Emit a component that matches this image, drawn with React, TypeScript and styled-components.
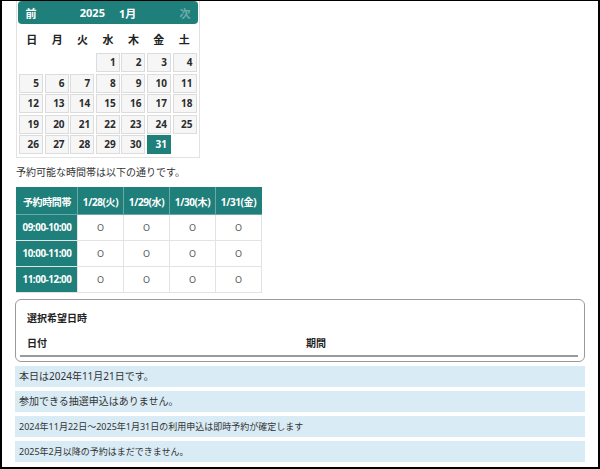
import styled, { createGlobalStyle } from "styled-components";

const TEAL = "#1f7f7b";

const GlobalStyle = createGlobalStyle`
    html, body {
        margin: 0;
        padding: 0;
        background: #fff;
    }
    body {
        font-family: "Noto Sans", "Noto Sans CJK JP", sans-serif;
        color: #333;
    }
`;

const Frame = styled.div`
    width: 600px;
    height: 469px;
    box-sizing: border-box;
    border: 2px solid #000;
    border-top-width: 1px;
    padding: 0 13px 0 13px;
    overflow: hidden;
`;

const Calendar = styled.div`
    width: 184px;
    box-sizing: border-box;
    border: 1px solid #e2e2e2;
    border-top: none;
    padding: 0 1px 3px 1px;
    margin-left: 1px;
`;

const CalHeader = styled.div`
    height: 23px;
    background: ${TEAL};
    border-radius: 4px;
    display: flex;
    align-items: center;
    padding: 0 6px;
    color: #fff;
    font-size: 11px;
    font-weight: 700;
`;

const NavLabel = styled.span<{ $disabled?: boolean }>`
    width: 14px;
    text-align: center;
    opacity: ${p => (p.$disabled ? 0.35 : 1)};
`;

const Title = styled.div`
    flex: 1;
    display: flex;
    justify-content: center;
    gap: 14px;
    font-size: 11px;
`;

const DayNames = styled.div`
    display: grid;
    grid-template-columns: repeat(7, 1fr);
    height: 28px;
    align-items: center;
    margin-top: 1px;
    padding: 0 1px;
    font-size: 11px;
    font-weight: 600;
    color: #222;
    text-align: center;
`;

const DayGrid = styled.div`
    display: grid;
    grid-template-columns: repeat(7, 24px);
    grid-auto-rows: 19px;
    column-gap: 1.6px;
    row-gap: 1.6px;
    padding: 0 1px;
`;

const DayCell = styled.div<{ $active?: boolean; $empty?: boolean }>`
    box-sizing: border-box;
    border: 1px solid ${p => (p.$empty ? "transparent" : p.$active ? TEAL : "#dcdcdc")};
    background: ${p => (p.$empty ? "transparent" : p.$active ? TEAL : "#f6f6f6")};
    color: ${p => (p.$active ? "#fff" : "#2b2b2b")};
    font-size: 10px;
    font-weight: 700;
    text-align: right;
    padding-right: 3px;
    line-height: 17px;
`;

const Lead = styled.p`
    margin: 7px 0 0 1px;
    font-size: 10px;
    line-height: 14px;
    color: #333;
`;

const Table = styled.table`
    margin: 8px 0 0 1px;
    border-collapse: collapse;
    table-layout: fixed;
    width: 246px;
    font-size: 9px;
`;

const Th = styled.th<{ $wide?: boolean }>`
    background: ${TEAL};
    color: #fff;
    font-weight: 700;
    font-size: 10px;
    letter-spacing: -0.4px;
    height: 26px;
    padding: 0;
    white-space: nowrap;
    width: ${p => (p.$wide ? "60px" : "45px")};
    border: 1px solid #6aa9a6;
    border-top-color: ${TEAL};
    &:first-child {
        border-left-color: ${TEAL};
    }
    &:last-child {
        border-right-color: ${TEAL};
    }
`;

const RowHead = styled.th`
    background: ${TEAL};
    color: #fff;
    font-weight: 700;
    font-size: 9.8px;
    letter-spacing: -0.4px;
    white-space: nowrap;
    height: 25px;
    padding: 0;
    border: 1px solid #e3e3e3;
    border-left-color: ${TEAL};
`;

const Td = styled.td`
    border: 1px solid #e3e3e3;
    text-align: center;
    color: #555;
    font-size: 9px;
    height: 25px;
    padding: 0;
`;

const SelectedCard = styled.div`
    margin-top: 6px;
    height: 63px;
    box-sizing: border-box;
    border: 1px solid #9a9a9a;
    border-radius: 6px;
    padding: 8px 6px 0 5px;
`;

const CardTitle = styled.div`
    font-size: 10px;
    font-weight: 700;
    color: #222;
    padding-left: 6px;
    height: 20px;
    line-height: 20px;
`;

const CardCols = styled.div`
    display: grid;
    grid-template-columns: 279px 1fr;
    font-size: 10px;
    font-weight: 700;
    color: #222;
    margin-top: 5px;
    margin-left: -1px;
    padding-left: 7px;
    height: 22px;
    line-height: 20px;
    border-bottom: 2px solid #9a9a9a;
`;

const Notices = styled.div`
    display: flex;
    flex-direction: column;
    gap: 4px;
    margin-top: 4px;
`;

const Notice = styled.div<{ $small?: boolean }>`
    height: 21px;
    line-height: 21px;
    background: #d9ebf5;
    padding-left: 4px;
    font-size: ${p => (p.$small ? "9px" : "10px")};
    color: #333;
`;

const days: (number | null)[] = [
    null, null, null, 1, 2, 3, 4,
    5, 6, 7, 8, 9, 10, 11,
    12, 13, 14, 15, 16, 17, 18,
    19, 20, 21, 22, 23, 24, 25,
    26, 27, 28, 29, 30, 31,
];

const dayNames = ["日", "月", "火", "水", "木", "金", "土"];
const columns = ["1/28(火)", "1/29(水)", "1/30(木)", "1/31(金)"];
const slots = ["09:00-10:00", "10:00-11:00", "11:00-12:00"];

const App = () => (
    <>
        <GlobalStyle />
        <Frame>
            <Calendar>
                <CalHeader>
                    <NavLabel>前</NavLabel>
                    <Title>
                        <span>2025</span>
                        <span>1月</span>
                    </Title>
                    <NavLabel $disabled>次</NavLabel>
                </CalHeader>
                <DayNames>
                    {dayNames.map(d => (
                        <span key={d}>{d}</span>
                    ))}
                </DayNames>
                <DayGrid>
                    {days.map((d, i) => (
                        <DayCell key={i} $empty={d === null} $active={d === 31}>
                            {d}
                        </DayCell>
                    ))}
                </DayGrid>
            </Calendar>

            <Lead>予約可能な時間帯は以下の通りです。</Lead>

            <Table>
                <thead>
                    <tr>
                        <Th $wide>予約時間帯</Th>
                        {columns.map(c => (
                            <Th key={c}>{c}</Th>
                        ))}
                    </tr>
                </thead>
                <tbody>
                    {slots.map(s => (
                        <tr key={s}>
                            <RowHead>{s}</RowHead>
                            {columns.map(c => (
                                <Td key={c}>O</Td>
                            ))}
                        </tr>
                    ))}
                </tbody>
            </Table>

            <SelectedCard>
                <CardTitle>選択希望日時</CardTitle>
                <CardCols>
                    <span>日付</span>
                    <span>期間</span>
                </CardCols>
            </SelectedCard>

            <Notices>
                <Notice>本日は2024年11月21日です。</Notice>
                <Notice>参加できる抽選申込はありません。</Notice>
                <Notice $small>2024年11月22日～2025年1月31日の利用申込は即時予約が確定します</Notice>
                <Notice $small>2025年2月以降の予約はまだできません。</Notice>
            </Notices>
        </Frame>
    </>
);

export default App;
